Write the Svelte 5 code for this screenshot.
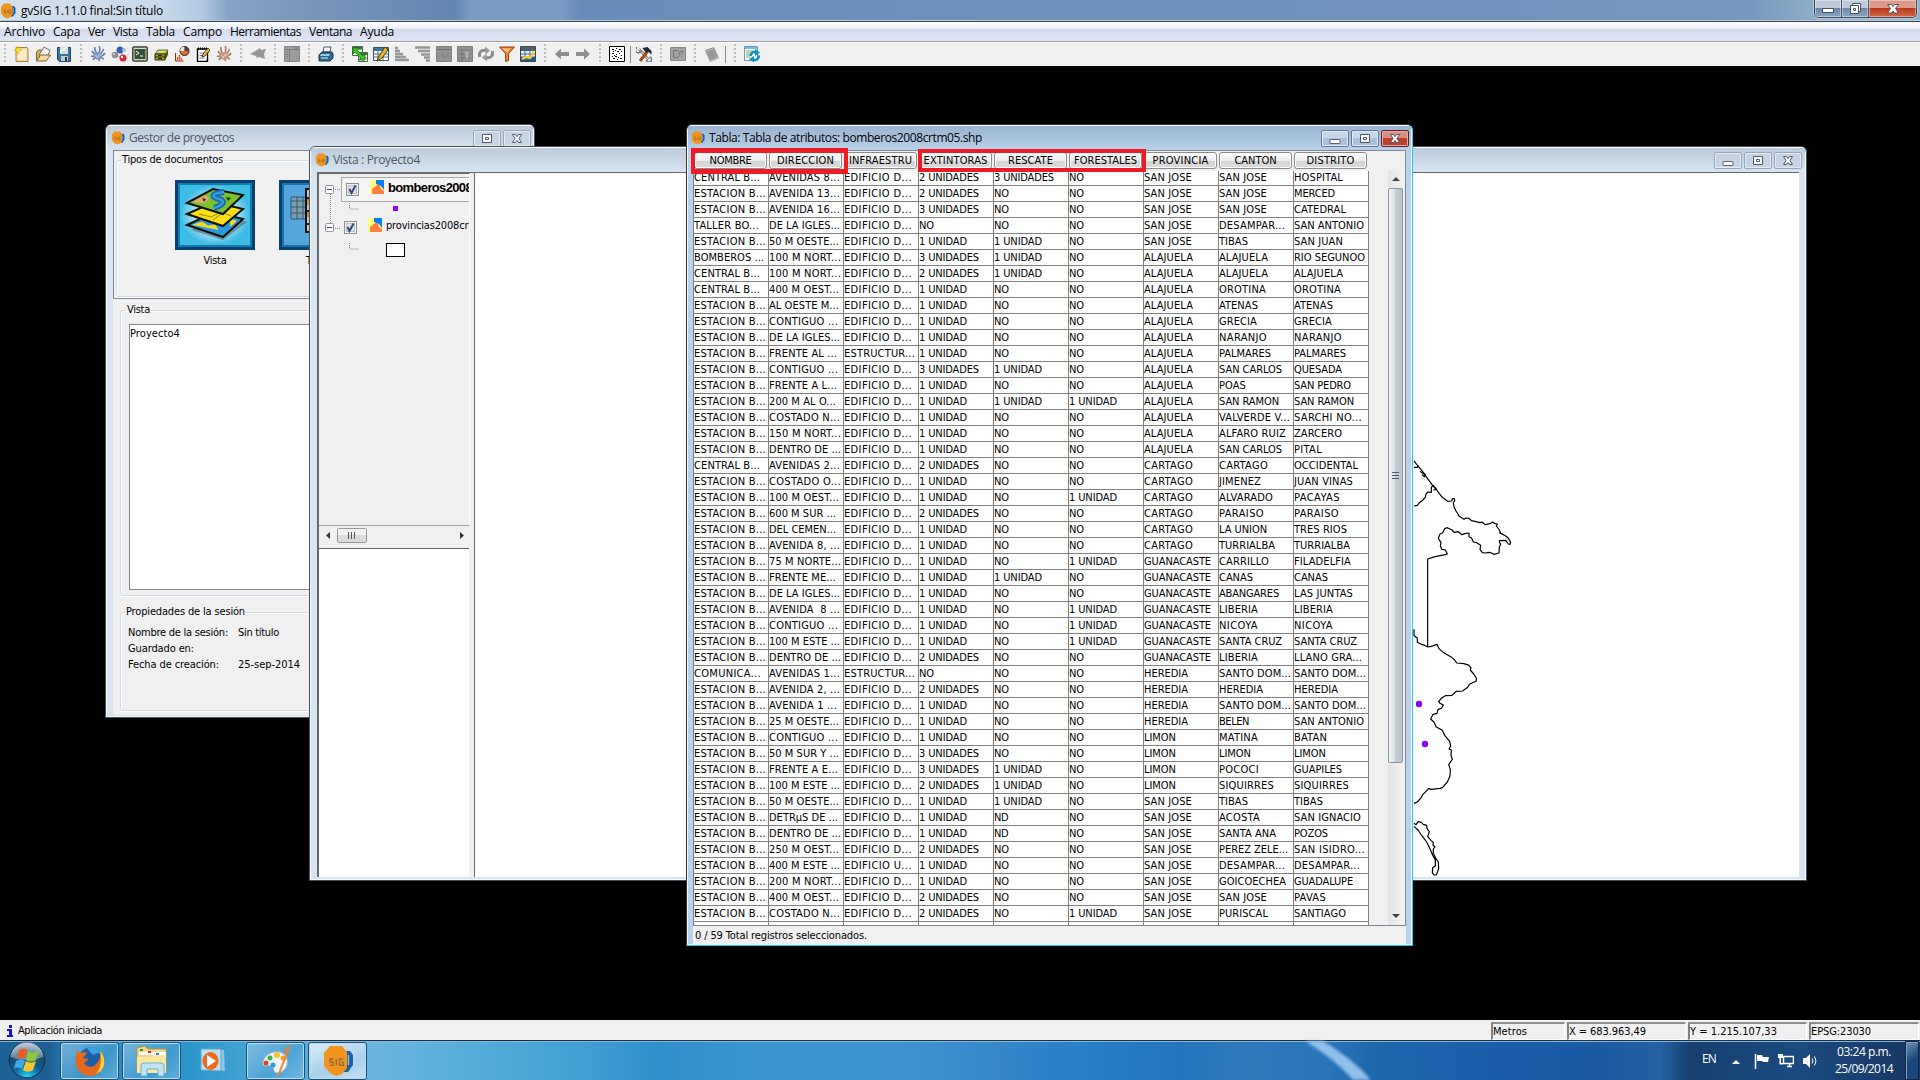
<script>
  const raw = `CENTRAL B...|AVENIDAS 8...|EDIFICIO D...|2 UNIDADES|3 UNIDADES|NO|SAN JOSE|SAN JOSE|HOSPITAL
ESTACION B...|AVENIDA 13...|EDIFICIO D...|2 UNIDADES|NO|NO|SAN JOSE|SAN JOSE|MERCED
ESTACION B...|AVENIDA 16...|EDIFICIO D...|3 UNIDADES|NO|NO|SAN JOSE|SAN JOSE|CATEDRAL
TALLER BO...|DE LA IGLES...|EDIFICIO D...|NO|NO|NO|SAN JOSE|DESAMPAR...|SAN ANTONIO
ESTACION B...|50 M OESTE...|EDIFICIO D...|1 UNIDAD|1 UNIDAD|NO|SAN JOSE|TIBAS|SAN JUAN
BOMBEROS ...|100 M NORT...|EDIFICIO D...|3 UNIDADES|1 UNIDAD|NO|ALAJUELA|ALAJUELA|RIO SEGUNOO
CENTRAL B...|100 M NORT...|EDIFICIO D...|2 UNIDADES|1 UNIDAD|NO|ALAJUELA|ALAJUELA|ALAJUELA
CENTRAL B...|400 M OEST...|EDIFICIO D...|1 UNIDAD|NO|NO|ALAJUELA|OROTINA|OROTINA
ESTACION B...|AL OESTE M...|EDIFICIO D...|1 UNIDAD|NO|NO|ALAJUELA|ATENAS|ATENAS
ESTACION B...|CONTIGUO ...|EDIFICIO D...|1 UNIDAD|NO|NO|ALAJUELA|GRECIA|GRECIA
ESTACION B...|DE LA IGLES...|EDIFICIO D...|1 UNIDAD|NO|NO|ALAJUELA|NARANJO|NARANJO
ESTACION B...|FRENTE AL ...|ESTRUCTUR...|1 UNIDAD|NO|NO|ALAJUELA|PALMARES|PALMARES
ESTACION B...|CONTIGUO ...|EDIFICIO D...|3 UNIDADES|1 UNIDAD|NO|ALAJUELA|SAN CARLOS|QUESADA
ESTACION B...|FRENTE A L...|EDIFICIO D...|1 UNIDAD|NO|NO|ALAJUELA|POAS|SAN PEDRO
ESTACION B...|200 M AL O...|EDIFICIO D...|1 UNIDAD|1 UNIDAD|1 UNIDAD|ALAJUELA|SAN RAMON|SAN RAMON
ESTACION B...|COSTADO N...|EDIFICIO D...|1 UNIDAD|NO|NO|ALAJUELA|VALVERDE V...|SARCHI NO...
ESTACION B...|150 M NORT...|EDIFICIO D...|1 UNIDAD|NO|NO|ALAJUELA|ALFARO RUIZ|ZARCERO
ESTACION B...|DENTRO DE ...|EDIFICIO D...|1 UNIDAD|NO|NO|ALAJUELA|SAN CARLOS|PITAL
CENTRAL B...|AVENIDAS 2...|EDIFICIO D...|2 UNIDADES|NO|NO|CARTAGO|CARTAGO|OCCIDENTAL
ESTACION B...|COSTADO O...|EDIFICIO D...|1 UNIDAD|NO|NO|CARTAGO|JIMENEZ|JUAN VINAS
ESTACION B...|100 M OEST...|EDIFICIO D...|1 UNIDAD|NO|1 UNIDAD|CARTAGO|ALVARADO|PACAYAS
ESTACION B...|600 M SUR ...|EDIFICIO D...|2 UNIDADES|NO|NO|CARTAGO|PARAISO|PARAISO
ESTACION B...|DEL CEMEN...|EDIFICIO D...|1 UNIDAD|NO|NO|CARTAGO|LA UNION|TRES RIOS
ESTACION B...|AVENIDA 8, ...|EDIFICIO D...|1 UNIDAD|NO|NO|CARTAGO|TURRIALBA|TURRIALBA
ESTACION B...|75 M NORTE...|EDIFICIO D...|1 UNIDAD|NO|1 UNIDAD|GUANACASTE|CARRILLO|FILADELFIA
ESTACION B...|FRENTE ME...|EDIFICIO D...|1 UNIDAD|1 UNIDAD|NO|GUANACASTE|CANAS|CANAS
ESTACION B...|DE LA IGLES...|EDIFICIO D...|1 UNIDAD|NO|NO|GUANACASTE|ABANGARES|LAS JUNTAS
ESTACION B...|AVENIDA  8 ...|EDIFICIO D...|1 UNIDAD|NO|1 UNIDAD|GUANACASTE|LIBERIA|LIBERIA
ESTACION B...|CONTIGUO ...|EDIFICIO D...|1 UNIDAD|NO|1 UNIDAD|GUANACASTE|NICOYA|NICOYA
ESTACION B...|100 M ESTE ...|EDIFICIO D...|1 UNIDAD|NO|1 UNIDAD|GUANACASTE|SANTA CRUZ|SANTA CRUZ
ESTACION B...|DENTRO DE ...|EDIFICIO D...|2 UNIDADES|NO|NO|GUANACASTE|LIBERIA|LLANO GRA...
COMUNICA...|AVENIDAS 1...|ESTRUCTUR...|NO|NO|NO|HEREDIA|SANTO DOM...|SANTO DOM...
ESTACION B...|AVENIDA 2, ...|EDIFICIO D...|2 UNIDADES|NO|NO|HEREDIA|HEREDIA|HEREDIA
ESTACION B...|AVENIDA 1 ...|EDIFICIO D...|1 UNIDAD|NO|NO|HEREDIA|SANTO DOM...|SANTO DOM...
ESTACION B...|25 M OESTE...|EDIFICIO D...|1 UNIDAD|NO|NO|HEREDIA|BELEN|SAN ANTONIO
ESTACION B...|CONTIGUO ...|EDIFICIO D...|1 UNIDAD|NO|NO|LIMON|MATINA|BATAN
ESTACION B...|50 M SUR Y ...|EDIFICIO D...|3 UNIDADES|NO|NO|LIMON|LIMON|LIMON
ESTACION B...|FRENTE A E...|EDIFICIO D...|3 UNIDADES|1 UNIDAD|NO|LIMON|POCOCI|GUAPILES
ESTACION B...|100 M ESTE ...|EDIFICIO D...|2 UNIDADES|1 UNIDAD|NO|LIMON|SIQUIRRES|SIQUIRRES
ESTACION B...|50 M OESTE...|EDIFICIO D...|1 UNIDAD|1 UNIDAD|NO|SAN JOSE|TIBAS|TIBAS
ESTACION B...|DETRµS DE ...|EDIFICIO D...|1 UNIDAD|ND|NO|SAN JOSE|ACOSTA|SAN IGNACIO
ESTACION B...|DENTRO DE ...|EDIFICIO D...|1 UNIDAD|ND|NO|SAN JOSE|SANTA ANA|POZOS
ESTACION B...|250 M OEST...|EDIFICIO D...|2 UNIDADES|NO|NO|SAN JOSE|PEREZ ZELE...|SAN ISIDRO...
ESTACION B...|400 M ESTE ...|EDIFICIO U...|1 UNIDAD|NO|NO|SAN JOSE|DESAMPAR...|DESAMPAR...
ESTACION B...|200 M NORT...|EDIFICIO D...|1 UNIDAD|NO|NO|SAN JOSE|GOICOECHEA|GUADALUPE
ESTACION B...|400 M OEST...|EDIFICIO D...|2 UNIDADES|NO|NO|SAN JOSE|SAN JOSE|PAVAS
ESTACION B...|COSTADO N...|EDIFICIO D...|2 UNIDADES|NO|1 UNIDAD|SAN JOSE|PURISCAL|SANTIAGO`;
  const rows = raw.split('\n').map((r) => r.split('|'));
  const heads = ['NOMBRE', 'DIRECCION', 'INFRAESTRU', 'EXTINTORAS', 'RESCATE', 'FORESTALES', 'PROVINCIA', 'CANTON', 'DISTRITO'];
  const menus = [['Archivo', 41], ['Capa', 27], ['Ver', 17], ['Vista', 25], ['Tabla', 29], ['Campo', 39], ['Herramientas', 71], ['Ventana', 43], ['Ayuda', 34]];

  // Advance widths of the grid font, in pixels
  const adv = { ' ': 3, '.': 4, ',': 3, B: 6, E: 6, F: 6, I: 4, J: 5, K: 6, L: 5, M: 8, O: 8, P: 6, Q: 8, S: 6, T: 6, V: 6, Y: 6, Z: 6, 'µ': 6 };
  const measure = (s) => [...s].reduce((n, c) => n + (adv[c] ?? (c >= '0' && c <= '9' ? 6 : 7)), 0);

  // Spreads letters so that a label takes exactly the given width
  function fit(node, width) {
    const w = node.getBoundingClientRect().width;
    node.style.letterSpacing = (width - w) / node.textContent.length + 'px';
  }

  const squid = (a, b) => `<path d="M2 5c1 2 2 3 4 4M1 10c2 1 3 0 5-1M3 14c1-2 2-3 4-4M5 1c-1 3 1 5 2 7M9 0c2 3 0 5 0 8M13 3c1 2-2 3-3 6M15 7c-1 2-3 3-5 3M14 13c-2 0-3-2-5-3M9 15c1-2-1-3-1-5" stroke="${a}" stroke-width="1.700" fill="none"/><circle cx="8" cy="10" r="3.800" fill="${b}"/><path d="M5.500 9l2 2.500 2-3.500 2 2" stroke="#fff" stroke-width=".9" fill="none" opacity=".7"/>`;
  const icons = {
    new: '<path d="M2 1.500h11l1 2v12h-12z" fill="#f3dca4" stroke="#a98241"/><path d="M4 4h8v10h-8z" fill="#fbeecb"/><path d="M4 0l1 3 3 1-3 1-1 3-1-3-3-1 3-1z" fill="#fff22a" stroke="#d3b400" stroke-width=".6"/>',
    open: '<path d="M1.500 15v-9l2-2h3l1 2h4v4" fill="#d7b36b" stroke="#80601f"/><path d="M4 9l5-8 6 3.500-3 6z" fill="#f2f2f2" stroke="#666" stroke-width=".9"/><path d="M1.500 15l4-6h10l-4.500 6z" fill="#f2d9a0" stroke="#80601f"/>',
    save: '<path d="M1.500 1.500h13v14h-11l-2-2z" fill="#37759c" stroke="#1a4561"/><path d="M4 1h8v7h-8z" fill="#d5dde0"/><path d="M5 10h7v5h-7z" fill="#c4ccd0"/><path d="M9 11h2v4h-2z" fill="#333"/><path d="M4 5l6-4h2l-8 6z" fill="#fff"/>',
    squid: squid('#6d83ad', '#8295bd'),
    globes: '<path d="M4 9l5-6 3 9z" fill="none" stroke="#aaa"/><circle cx="4" cy="9" r="3.300" fill="#8e9193"/><circle cx="9" cy="4" r="3.500" fill="#345fb2"/><circle cx="13" cy="4" r="2" fill="#bbb"/><circle cx="12" cy="12" r="3.500" fill="#e3202c"/><circle cx="11" cy="11" r="1.200" fill="#fff"/><circle cx="3" cy="8" r="1" fill="#ddd"/>',
    console: '<rect x=".8" y="1" width="14.400" height="14" rx="1" fill="#dcdcc0" stroke="#3b4433" stroke-width="1.500"/><rect x="2.500" y="3" width="11" height="10" fill="#34513a"/><path d="M4 5l3 2-3 2M8 10h3" stroke="#fff" fill="none"/>',
    drawer: '<path d="M2 8l3-4h10l-3 4z" fill="#d2dc5f" stroke="#333" stroke-width=".7"/><path d="M12 8l3-4v5l-3 5z" fill="#5c6310"/><path d="M2 8h10v6h-10z" fill="#a2ac28" stroke="#26290a"/><path d="M2 11h10M5 9.500h4M5 12.500h4" stroke="#26290a"/>',
    pie: '<path d="M1.500 7v8h8" stroke="#8a2414" fill="none"/><path d="M3.500 14v-3M5.500 14v-5M7.500 14v-2" stroke="#e0542c" stroke-width="1.400"/><circle cx="10.500" cy="5" r="4.500" fill="#e96d2e" stroke="#222"/><path d="M10.500 5V.5A4.500 4.500 0 0 0 6 5z" fill="#e4e4e4"/><path d="M10.500 5V.5A4.500 4.500 0 0 1 15 5z" fill="#444"/>',
    note: '<path d="M2.500 3h10v12.500h-10z" fill="#fff" stroke="#000" stroke-width="1.400"/><path d="M3 2.500h9" stroke="#000" stroke-width="2" stroke-dasharray="1 1"/><path d="M4.500 7h5M4.500 9.500h3M4.500 12h5" stroke="#777"/><path d="M7 11l1-3 5-6 2 2-5 6z" fill="#f2b632" stroke="#222" stroke-width=".8"/>',
    squid2: squid('#a97c6a', '#c5977f'),
    fish: '<path d="M0 8l7-4 3-2 1 2 5-1-2 5 1 5-6-2-2 1-1-2z" fill="#969696"/>',
    form: '<path d="M.5.500h15v15h-15z" fill="#9c9c9c" stroke="#858585"/><path d="M1 3.500h14M10 2h4M5.500 4v11" stroke="#7c7c7c"/><path d="M2 6h2M2 8.500h2M2 11h2" stroke="#808080"/>',
    print: '<path d="M5 6l1-5h7l-1 5z" fill="#fff" stroke="#456"/><path d="M1 9l3-3h10l1 2v4l-3 3h-11z" fill="#2d6a90" stroke="#15344a"/><path d="M3 8h9l-1 2h-9z" fill="#9fc5d8"/><path d="M3 12h7" stroke="#d7eaf3"/>',
    tgreen: '<path d="M.5.500h10v9h-10z" fill="#dfeadf" stroke="#456b47"/><path d="M1 1h9v2.500h-9z" fill="#397449"/><path d="M6.500 6.500h9v9h-9z" fill="#fff" stroke="#456b47"/><path d="M7 7h8v2h-8z" fill="#397449"/><path d="M7 12h8M10.500 9v6" stroke="#678"/><path d="M1 2h6l-2 2 6 6 2-2v6h-6l2-2-6-6-2 2z" fill="#38c51d" stroke="#126b08" stroke-width=".7"/>',
    tpencil: '<path d="M.5 1.500h15v13h-15z" fill="#fff" stroke="#33556e"/><path d="M1 2h14v3h-14z" fill="#3f7a9b"/><path d="M1 8h14M1 11h14M5 3v11M10 3v11" stroke="#4f7187"/><path d="M4 15l2-5 6-9 3 3-6 8z" fill="#e7b52a" stroke="#4e3b07"/>',
    asc: '<path d="M1 2h3M1 5h5M1 8h8M1 11h11M1 14h14" stroke="#969696" stroke-width="2.300"/>',
    desc: '<path d="M0 1.500h15M3 5h12M6 8.500h9M9 11.500h6M11 14.500h4" stroke="#969696" stroke-width="2.300"/>',
    gbox: '<path d="M.5.500h15v15h-15z" fill="#929292" stroke="#7f7f7f"/><path d="M1 3.500h14" stroke="#707070"/><path d="M6 9l3 3 4-5" stroke="#7c7c7c" fill="none"/>',
    gtab: '<path d="M.5.500h15v15h-15z" fill="#929292" stroke="#7f7f7f"/><path d="M1 4h14M1 8h14M1 12h14M5 4v12" stroke="#777"/><path d="M7 8l3-3 3 3zM9 8h2v5h-2z" fill="#b0b0b0"/>',
    refresh: '<path d="M2 11C0 6 4 3.500 8 4.500M14 5C16 10 12 12.500 8 11.500" stroke="#8c8c8c" stroke-width="3" fill="none"/><path d="M7 .5l5 4-4.500 4zM9 15.500l-5-4 4.500-4z" fill="#9b9b9b"/>',
    funnel: '<path d="M.6 1h14.800l-5.800 6.500v7l-3 1v-8z" fill="#f28332" stroke="#8c3e0b"/><path d="M3 2.500h9l-4 4z" fill="#ffc183"/>',
    chart: '<path d="M.5.500h15v15h-15z" fill="#e9eef2" stroke="#444"/><path d="M1 1h14v4h-14z" fill="#52616e"/><path d="M1 8h14M1 11h14M5 5v10M10 5v10" stroke="#3b74b1"/><path d="M1 11h14v4h-14z" fill="#1d5d9b"/><path d="M2 13l4-2 4 1 4-6" stroke="#ffcc24" stroke-width="2.400" fill="none"/>',
    left: '<path d="M1 8l6-5.500v3.500h8v4h-8v3.500z" fill="#8e8e8e"/>',
    right: '<path d="M15 8l-6-5.500v3.500h-8v4h8v3.500z" fill="#8e8e8e"/>',
    dots: '<path d="M.5.500h15v15h-15z" fill="#fff" stroke="#000"/><path d="M3 3.500h2M7 2.500h1M10 3.500h2M4 5.500h1M8 5.500h2M12 5.500h1M3 7.500h2M7 8.500h1M10 7.500h1M12 9.500h1M3 10.500h1M6 10.500h2M9 11.500h1M4 12.500h2M8 13.500h1M11 12.500h2M5 9.500h1M6 4.500h1" stroke="#000"/>',
    tools: '<path d="M3 3l9.500 10.500" stroke="#70757a" stroke-width="2.600"/><path d="M3 3l9.500 10.500" stroke="#e7e7e7" stroke-width="1"/><path d="M1 1.500a2.800 2.800 0 1 0 4 3M10.500 14a2.600 2.600 0 1 0 3-3" fill="none" stroke="#70757a" stroke-width="1.500"/><path d="M4 15l7-9" stroke="#a44a1b" stroke-width="3"/><path d="M6.500 2l5-1 4 4v3.500l-3-2.500-2.500 1z" fill="#22272c"/>',
    dbox: '<path d="M.5 1.500h15v13h-15z" fill="#a2a2a2" stroke="#888"/><path d="M3.500 4.500h4l2 2v3l-2 2h-4zM10 5.500h3l-2 3M11 10.500h1" fill="none" stroke="#777"/>',
    book: '<path d="M1 4l9-3 5 11-9 4z" fill="#989898"/><path d="M3 5l6-2M6 15l8-4" stroke="#bbb"/>',
    reload: '<path d="M.5.500h13v14h-13z" fill="#f6fbf6" stroke="#5b9ac4"/><path d="M1 1h12v2h-12z" fill="#84b9dc"/><path d="M2 5h9M2 7h6M2 9h4M2 11h4" stroke="#79b06c"/><path d="M6.500 10C7 6 10 5.500 12 6.500M15 9.500C14.500 14 11 14.500 9 13.500" stroke="#1590cd" stroke-width="2.600" fill="none"/><path d="M11 3l5 3.500-5 3.500zM10 16.500l-5-3.500 5-3z" fill="#1590cd"/>'
  };
  const toolbar = '| new open save | squid globes console drawer pie note squid2 | fish | form | print | tgreen tpencil asc desc gbox gtab refresh funnel chart | left right | dots ! tools | dbox | book ! | reload'.split(' ');
</script>

{#snippet gv(size)}
  <svg class="gv" width={size} height={size} viewBox="0 0 16 16">
    <path d="M11 3h3l1.500 2v5l-2.500 3.500h-2z" fill="#1d62a0" /><path d="M13.200 5v5" fill="none" stroke="#8fbce0" stroke-width=".7" />
    <path d="M4 .5h6l2.500 3v8l-2.500 3-3 1-3-1.500-3-3.500v-6.500z" fill="#f0941c" /><path d="M5.600 7h-1.600v1.500h1.500v1.700h-1.600M7.200 7v3.200M10.600 7h-1.800v3.200h1.800v-1.600h-.8" stroke="#8f6a3d" stroke-width=".7" fill="none" />
  </svg>
{/snippet}
{#snippet btn(kind, red = false)}
  <span class="wb" class:red>
    <svg width="14" height="12" viewBox="0 0 14 12">
      {#if kind === 'min'}<rect x="2" y="6.500" width="10" height="4" rx=".5" fill="#fff" stroke="#5a6274" />
      {:else if kind === 'max'}<path d="M2.500 1.500h9v8h-9zM5.500 4.500h3v2h-3z" fill="#fff" stroke="#4f586c" />
      {:else}<path d="M2.500 1.500h3L7 3.500l1.500-2h3L9 5.500l2.500 4h-3L7 7.500l-1.500 2h-3L5 5.500z" fill="#fff" stroke="#4f586c" />{/if}
    </svg>
  </span>
{/snippet}

<div class="screen">
  <header class="title">
    {@render gv(16)}<span class="t seg" use:fit={142}>gvSIG 1.11.0 final:Sin título</span>
    <div class="caps">
      <i><svg width="14" height="12"><rect x="1.500" y="5.500" width="11" height="4" fill="#fff" stroke="#4b5568" /></svg></i>
      <i><svg width="14" height="14"><path d="M4.500 1.500h8v8h-8z" fill="#fff" stroke="#4b5568" /><path d="M2.500 3.500h8v8h-8zM5.500 6.500h2v2h-2z" fill="#fff" stroke="#4b5568" /></svg></i>
      <i class="close"><svg width="14" height="12"><path d="M1.500 1.500h4l1.500 2 1.500-2h4l-3 4 3 4.500h-4L7 8l-1.500 2h-4l3-4.500z" fill="#fff" stroke="#5c4a5a" /></svg></i>
    </div>
  </header>
  <nav class="menu">{#each menus as [m, w]}<span class="seg" use:fit={w}>{m}</span>{/each}</nav>
  <div class="tools">
    {#each toolbar as k}
      {#if k === '|'}<span class="sep"></span>
      {:else if k === '!'}<span class="line"></span>
      {:else}<span class="ico"><svg width="16" height="16" viewBox="0 0 16 16">{@html icons[k]}</svg></span>{/if}
    {/each}
  </div>

  <main class="desk">
    <section class="win gestor">
      <div class="bar">{@render gv(14)}<span class="seg" use:fit={105}>Gestor de proyectos</span><div class="wbs">{@render btn('max')}{@render btn('x')}</div></div>
      <div class="gbody">
        <div class="types">
          <fieldset>
            <legend><span use:fit={101}>Tipos de documentos</span></legend>
            <div class="docs">
              <div class="doc">
                <svg width="80" height="70" viewBox="0 0 80 70">
                  <defs><radialGradient id="glow"><stop offset=".35" stop-color="#effdff" /><stop offset="1" stop-color="#3cbbe4" /></radialGradient></defs>
                  <rect width="80" height="70" fill="#05406e" /><rect x="3" y="3" width="74" height="64" fill="#117bb0" /><rect x="5" y="5" width="70" height="60" fill="url(#glow)" />
                  <path d="M16 50l34-16 22 8-24 18z" fill="#444" opacity=".45" />
                  <path d="M12 45l28-13 28 7-20 18z" fill="#279bdc" stroke="#111" stroke-width="2" /><path d="M18 45l9-3 6 4 7-1 3 5M55 39l6 2-5 5z" fill="#f3da22" stroke="#f3da22" />
                  <path d="M12 34l27-12 29 7-20 17z" fill="#fcdf14" stroke="#111" stroke-width="2" /><path d="M24 34l12 3 10-5 10 4M38 40l8-6 8-7" stroke="#9d8508" fill="none" />
                  <path d="M12 23l26-14 30 6-20 19z" fill="#7cc22f" stroke="#111" stroke-width="2" /><path d="M17 22l13-7 4 4-4 4z" fill="#eda678" /><path d="M49 12c-15 2-12 5-5 7s4 6-5 9" stroke="#1768ad" stroke-width="6" fill="none" /><path d="M49 12c-15 2-12 5-5 7s4 6-5 9" stroke="#3a98dd" stroke-width="2.500" fill="none" /><path d="M27 18l4 1-2 3zM51 17l5 1-3 3z" fill="#193c11" />
                </svg>
                <span use:fit={23}>Vista</span>
              </div>
              <div class="doc">
                <svg width="80" height="70" viewBox="0 0 80 70">
                  <rect width="80" height="70" fill="#05406e" /><rect x="3" y="3" width="74" height="64" fill="#1673ae" /><rect x="5" y="5" width="70" height="60" fill="#55a6dc" />
                  <path d="M12 17h16v22h-16z" fill="#7d9cae" stroke="#2d5872" /><path d="M12 21h16M12 27h16M12 33h16M18 17v22M24 17v22" stroke="#325a74" /><path d="M27 9h30v43h-30z" fill="#bfc6c9" stroke="#111" stroke-width="2" /><path d="M28 19h28v6h-28zM28 32h28v5h-28z" fill="#c98b35" /><path d="M28 18h28M28 31h28M28 44h28" stroke="#222" stroke-width="2" />
                </svg>
                <span use:fit={26}>Tabla</span>
              </div>
            </div>
          </fieldset>
        </div>
        <fieldset class="list"><legend><span use:fit={23}>Vista</span></legend><div class="lb"><span use:fit={50}>Proyecto4</span></div></fieldset>
        <fieldset class="props"><legend><span use:fit={119}>Propiedades de la sesión</span></legend>
          <dl><dt><span use:fit={100}>Nombre de la sesión:</span></dt><dd><span use:fit={41}>Sin título</span></dd><dt><span use:fit={66}>Guardado en:</span></dt><dd></dd><dt><span use:fit={91}>Fecha de creación:</span></dt><dd><span use:fit={62}>25-sep-2014</span></dd></dl>
        </fieldset>
      </div>
    </section>

    <section class="win vista">
      <div class="bar">{@render gv(14)}<span class="seg" use:fit={87}>Vista : Proyecto4</span><div class="wbs">{@render btn('min')}{@render btn('max')}{@render btn('x')}</div></div>
      <div class="vbody">
        <aside>
          <div class="toc">
            <svg class="conn" width="150" height="100"><path d="M11.500 20v29M16 15.500h6M16 54.500h6M30.500 29v6h10M30.500 69v6h10" fill="none" stroke="#888" stroke-dasharray="1 1" /></svg>
            {#each [['bomberos2008', true], ['provincias2008crt', false]] as [name, active]}
              <div class="layer" class:active>
                <svg class="pm" width="9" height="9"><rect x=".5" y=".5" width="8" height="8" rx="1" fill="#fff" stroke="#929292" /><path d="M2 4.500h5" stroke="#2a4aa0" /></svg>
                <div class="lab">
                  <svg class="cb" width="13" height="13"><rect x=".5" y=".5" width="12" height="12" fill="#f4f4f4" stroke="#8e8f8f" /><rect x="2.500" y="2.500" width="8" height="8" fill="#dfe3e8" stroke="#b9bec5" /><path d="M3.500 6l2 4 4-7.500" stroke="#34497f" stroke-width="2" fill="none" /></svg>
                  <svg width="14" height="14"><path d="M0 0h14v14h-14z" fill="#ffff80" /><path d="M6 0h8v10l-3-4-5-2z" fill="#0080ff" /><path d="M2 14v-5l5-4h3l1 4 3 2v3z" fill="#ff8040" /></svg>
                  <span use:fit={active ? 84 : 86}>{name}</span>
                </div>
              </div>
              <div class="sym">{#if active}<b></b>{:else}<em></em>{/if}</div>
            {/each}
          </div>
          <div class="hs"><svg width="150" height="17"><path d="M11 5v7l-4-3.500zM141 5v7l4-3.500z" fill="#333" /><rect x="18.500" y="1.500" width="29" height="14" rx="1" fill="#dcdcdc" stroke="#979797" /><path d="M19 2h28v6h-28z" fill="#f1f1f1" /><path d="M29.500 5v7M32.500 5v7M35.500 5v7" stroke="#555" /></svg></div>
          <div class="loc"></div>
        </aside>
        <div class="map">
          <svg width="1323" height="703">
            <g transform="translate(885 227) scale(.33333)" fill="none" stroke="#000" stroke-width="3.600" stroke-linejoin="round">
              <path d="M162 183L170 193 186 212 200 232 216 254 230 270 245 290 263 304 275 303 277 296 283 296 284 303 280 308 282 320 288 333 298 349 312 358 318 354 326 355 335 362 348 365 360 368 366 366 376 374 390 371 398 366 405 371 412 372 409 378 418 390 422 400 437 408 444 413 452 427 450 433 445 432 437 421 418 422 419 428 422 433 418 441 417 459 402 463 395 459 387 457 376 459 367 458 360 448 362 436 350 428 340 426 335 415 327 410 327 399 314 401 306 404 295 395 282 397 276 390 262 383 254 386 248 398 240 402 235 415 243 428 241 438 246 448 256 450 262 462 256 464 225 470 203 477V740" />
              <path d="M162 318L172 316 178 308 190 299 196 292 198 282 204 276 214 277 214 262 219 256 230 268 220 270M162 202h10l2-6M180 214l10 7 6 2-2 7-8-6M418 398l10 5" />
              <path d="M162 688L162 707 172 714 172 727 182 732 194 736 203 741 214 739 231 733 237 746 247 755 259 763 275 772 284 780 290 789 312 791 327 796 333 803 331 810 341 822 349 834 349 843 328 853 323 862 308 873 288 874 276 886 256 887 245 894 236 904 240 910 250 915 245 924 234 929 231 940 219 943 212 957 222 966 228 980 247 991 254 1006 269 1024 272 1038 267 1047 274 1050 273 1066 277 1078 266 1094 271 1108 270 1128 262 1146 248 1162 240 1165 215 1168 206 1166 188 1184 184 1192 172 1206 162 1210" />
              <path d="M162 1270L168 1274 175 1265 184 1267 190 1273 200 1276 201 1286 208 1295 203 1310 214 1322 220 1328 219 1336 225 1340 220 1347 220 1360 228 1376 235 1386 236 1406 229 1425 222 1425 217 1418 218 1403 226 1398 226 1379 218 1366 210 1346 200 1326 188 1310 182 1302 174 1290 162 1279" />
            </g>
            <circle cx="944" cy="531" r="3.200" fill="#9000ff" /><circle cx="950" cy="571" r="3.200" fill="#9000ff" />
          </svg>
        </div>
      </div>
    </section>

    <section class="win tabla">
      <div class="bar">{@render gv(14)}<span class="seg" use:fit={273}>Tabla: Tabla de atributos: bomberos2008crtm05.shp</span><div class="wbs">{@render btn('min')}{@render btn('max')}{@render btn('x', true)}</div></div>
      <div class="grid">
        <div class="cols">
          <div class="hr">{#each heads as h}<div><span use:fit={measure(h)}>{h}</span></div>{/each}</div>
          <div class="rows">
            {#each rows as r}<div class="row">{#each r as c}<div><span use:fit={measure(c)}>{c}</span></div>{/each}</div>{/each}
            <div class="row">{#each heads as h}<div></div>{/each}</div>
          </div>
        </div>
        <div class="vs">
          <svg width="16" height="18"><path d="M4 11h8l-4-4z" fill="#444" /></svg>
          <div class="thumb"><i></i></div>
          <svg width="16" height="18"><path d="M4 7h8l-4 4z" fill="#444" /></svg>
        </div>
      </div>
      <div class="foot"><span use:fit={172}>0 / 59 Total registros seleccionados.</span></div>
      <div class="mark m1"></div><div class="mark m2"></div>
    </section>
  </main>

  <footer class="status">
    <svg width="6" height="12"><path d="M2 0h3v3h-3zM0 4h5v6h1v2h-6v-2h2v-4h-2z" fill="#1414d8" /></svg>
    <span use:fit={84}>Aplicación iniciada</span>
    <div class="cells">
      <div><span use:fit={34}>Metros</span></div><div><span use:fit={77}>X = 683.963,49</span></div><div><span use:fit={87}>Y = 1.215.107,33</span></div><div><span use:fit={60}>EPSG:23030</span></div>
    </div>
  </footer>
  <div class="task">
    <svg class="streak" width="90" height="39"><path d="M10 0h18q30 18 48 39h-18Q40 18 10 0z" fill="#a5cdf4" opacity=".85" /></svg>
    <div class="orb"><svg width="38" height="38" viewBox="0 0 38 38">
      <defs><radialGradient id="orb" cx=".5" cy="1" r="1"><stop offset="0" stop-color="#23d7ff" /><stop offset=".4" stop-color="#10619a" /><stop offset=".7" stop-color="#1d4968" /><stop offset="1" stop-color="#a9bdcb" /></radialGradient></defs>
      <circle cx="19" cy="19" r="17.800" fill="url(#orb)" stroke="#12344f" /><path d="M3 16a16 15 0 0 1 32 0c-8 4-24 4-32 0z" fill="#fff" opacity=".35" />
      <path d="M11 9c3-2 6-2 8 0l-2 9c-3-2-5-2-8 0z" fill="#ee5a23" /><path d="M20 10c3 2 7 2 11 0l-3 9c-3 2-7 2-10 0z" fill="#8cc63f" /><path d="M8 20c3-2 6-2 9 0l-3 8c-3-2-5-2-8 0z" fill="#3fa9e8" /><path d="M18 20c3 2 6 2 10 0l-3 9c-3 2-7 2-10 0z" fill="#fdc82e" />
    </svg></div>
    <div class="tb"><svg width="32" height="32" viewBox="0 0 32 32"><circle cx="17" cy="14" r="12" fill="#1f5fa6" /><path d="M13 3c6-3 13 1 14 6-3-2-5-1-7 1-3-1-5-4-7-7z" fill="#39a2dc" /><path d="M3 5c1 2 2 2 4 3 2-1 4-1 6 0-1 2-3 3-4 5l5 1c-1 3-3 3-4 4 2 4 8 5 11 2 5-4 6-9 5-14 5 5 6 14 1 20-6 7-17 6-22 0C1 21 1 11 3 5z" fill="#e66a1c" /><path d="M26 6c5 5 6 14 1 20l-5 3c5-5 6-14 4-23z" fill="#fbd13a" /></svg></div>
    <div class="tb"><svg width="34" height="32" viewBox="0 0 34 32"><path d="M2 3l8-2 3 3h18v23h-29z" fill="#f3da86" stroke="#b69843" /><path d="M4 7h27v3h-27z" fill="#fff" /><path d="M5 4h3v2h-3z" fill="#18a42f" /><path d="M13 6h3v2h-3z" fill="#d42a28" /><path d="M21 8h3v2h-3z" fill="#2585dc" /><path d="M2 12h13l3-2h13v18h-29z" fill="#f9e7a2" /><path d="M6 31v-10q0-3 3-3h17q3 0 3 3v10h-6v-7h-11v7z" fill="#bfe6f7" stroke="#6baecd" /></svg></div>
    <div class="tb plain"><svg width="28" height="28" viewBox="0 0 28 28"><path d="M6 3h19l1 21-19-1z" fill="#8fc6e2" /><path d="M2 2h20v22l-20-1z" fill="#b9dff1" stroke="#64a5c6" /><ellipse cx="11.500" cy="14" rx="8" ry="9" fill="#ef6a1a" /><path d="M8 8l9 6-9 6z" fill="#fff" /></svg></div>
    <div class="tb"><svg width="34" height="32" viewBox="0 0 34 32"><path d="M4 16C8 5 25 3 28 14c2 8-4 14-10 14-5 0-2-6-6-7S2 23 4 16z" fill="#edf3f8" stroke="#9fb2c2" /><circle cx="7" cy="18" r="2.500" fill="#df3d2d" /><circle cx="11" cy="13" r="2.500" fill="#35b548" /><circle cx="18" cy="10" r="3" fill="#f6c22d" /><circle cx="24" cy="13" r="2.500" fill="#ef9c2a" /><circle cx="14" cy="20" r="2.500" fill="#2e9ad8" /><path d="M18 31l9-23 2 1-9 22z" fill="#eb8a31" /><path d="M25 8c0-4 2-7 6-8 0 5 0 8-4 10z" fill="#b98c65" /></svg></div>
    <div class="tb on">{@render gv(32)}</div>
    <div class="tray">
      <span class="seg en" use:fit={14}>EN</span>
      <svg width="8" height="5"><path d="M0 5l4-4 4 4z" fill="#fff" /></svg>
      <svg width="16" height="16"><path d="M1.500 1v15" stroke="#fff" stroke-width="1.500" /><path d="M3 2h5l1 2h6l-1 5h-5l-1-1h-5z" fill="#fff" /></svg>
      <svg width="16" height="16"><path d="M5.500 3.500h10v7h-10zM9 13.500h5M11.500 11v3" fill="none" stroke="#fff" stroke-width="1.500" /><path d="M0 1h5v4h-2v5h2v1.500h-3.500V5H0z" fill="#fff" /></svg>
      <svg width="16" height="16"><path d="M1 5h3l4-4v14l-4-4h-3z" fill="#fff" /><path d="M10 5.500q2 2.500 0 5M12.500 3.500q3 4.500 0 9" fill="none" stroke="#fff" /></svg>
      <div class="clock"><span class="seg" use:fit={54}>03:24 p.m.</span><span class="seg" use:fit={58}>25/09/2014</span></div>
      <div class="show"></div>
    </div>
  </div>
</div>

<style>
  :global(body) { background: #000; overflow: hidden; }
  .screen { width: 1920px; height: 1080px; display: flex; flex-direction: column; background: #000; font: 11px/14px 'DejaVu Sans Condensed', 'DejaVu Sans', sans-serif; font-stretch: condensed; color: #000; overflow: hidden; }
  .screen * { box-sizing: border-box; }
  span { white-space: pre; }
  svg { display: block; flex: none; }
  .screen .seg { font-family: 'Open Sans', 'Noto Sans', sans-serif; font-size: 12px; font-stretch: normal; }
  .title { height: 22px; flex: none; display: flex; align-items: flex-start; padding: 3px 2px 0 0; border-bottom: 1px solid #3b4658; box-shadow: inset 0 -1px #b9cbe0; background: linear-gradient(90deg, #d4e0ee 0, #c9d9ea 160px, #b3cbe3 200px, #86a5c6 228px, #7897b9 300px, #6287b0 455px, #789bc2 470px, #789bc2 560px, #668db7 580px, #6a90b9 800px, #6f93ba 1500px, #7598bd 1750px, #8cadc8 1810px, #93b1ca); }
  .title .t { margin: 0 0 0 5px; line-height: 16px; }
  .caps { display: flex; margin: -3px 1px 0 auto; width: 103px; height: 18px; border: 1px solid #3c4656; border-top: 0; border-radius: 0 0 5px 5px; overflow: hidden; box-shadow: 0 0 0 1px #b9cbdd; }
  .caps i { display: flex; align-items: center; justify-content: center; width: 27px; border-right: 1px solid #46546a; background: linear-gradient(#bccad9 0 45%, #6e88a6 50%, #8aa6c4); box-shadow: inset 0 0 0 1px #ffffff66; }
  .caps .close { flex: 1; border: 0; background: linear-gradient(#dd9a8a 0 45%, #bb3a1f 50%, #d66a48); }
  .menu { height: 20px; flex: none; display: flex; gap: 8px; padding: 2px 4px; background: linear-gradient(#fff 0, #e9edf6 7px, #d4dbed 7px, #dfe5f5 19px); border-bottom: 1px solid #a0a0a0; }
  .menu span { line-height: 16px; }
  .tools { height: 24px; flex: none; display: flex; background: #f0f0f0; border-top: 1px solid #fff; align-items: center; padding-bottom: 1px; }
  .tools > :first-child { margin-left: -1.500px; }
  .ico { width: 21px; padding-left: 2.500px; }
  .sep { width: 13px; height: 20px; flex: none; background: repeating-linear-gradient(#bdbdbd 0 2px, transparent 2px 4px) 5.500px 0 / 2px 100% no-repeat; }
  .line { width: 6px; height: 17px; flex: none; background: linear-gradient(#8c8c8c, #8c8c8c) 2.500px 0 / 1px 100% no-repeat; }
  .desk { height: 954px; flex: none; position: relative; }
  .win { position: absolute; border: 1px solid #4c4f55; border-radius: 6px 6px 0 0; background: #d7e4f2; padding: 0 7px; box-shadow: inset 1px 1px #f6fafd, inset -1px -1px #f2f7fb; display: flex; flex-direction: column; overflow: hidden; }
  .bar { height: 25px; flex: none; display: flex; align-items: center; gap: 4px; color: #4b5560; margin: 0 -6px; padding: 0 0 0 4px; background: linear-gradient(#f6fafd 1px, #bccbda 1px, #d7e4f2); }
  .bar span { line-height: 16px; }
  .wbs { display: flex; gap: 2px; margin: 5px 2px 0 auto; align-self: flex-start; }
  .wb { width: 28px; height: 17px; display: flex; align-items: center; justify-content: center; border: 1px solid #9aa7ba; border-radius: 2px; box-shadow: inset 0 0 0 1px #e3ecf6; background: #c6d4e4; }
  .gestor { left: 105px; top: 58px; width: 430px; height: 594px; }
  .gbody { flex: 1; background: #f0f0f0; margin-bottom: 2px; }
  .types { height: 149px; border: 1px solid #828790; padding: 2px; }
  fieldset { margin: 0; min-width: 0; border: 1px solid #d0dbe4; border-radius: 3px; box-shadow: inset 1px 1px #fff, 0 1px #fff; padding: 0; }
  legend { margin-left: 4px; padding: 0 1px; line-height: 14px; }
  .types fieldset { height: 144px; }
  .docs { display: flex; gap: 24px; padding: 13px 0 0 58px; }
  .doc { display: flex; flex-direction: column; align-items: center; gap: 4px; }
  .list { height: 293px; margin: 4px 7px 0; padding: 8px; }
  .list legend { margin-left: -3px; }
  .lb { height: 266px; margin-top: -1px; border: 1px solid #828790; background: #fff; padding: 2px 0 0; }
  .props { height: 106px; margin: 9px 7px 0; }
  dl { margin: 6px 0 0 7px; display: grid; grid-template-columns: 110px auto; grid-auto-rows: 16px; line-height: 16px; }
  dd, dt { margin: 0; }
  .vista { left: 309px; top: 80px; width: 1498px; height: 735px; }
  .vista .bar { margin-bottom: 0; }
  .vista .wbs { margin-right: 3px; }
  .vbody { flex: 1; display: flex; background: #f0f0f0; margin-bottom: 3px; border-top: 1px solid #696969; }
  aside { width: 156px; padding-right: 4px; border-left: 2px solid #696969; display: flex; flex-direction: column; }
  .toc { height: 353px; flex: none; position: relative; overflow: hidden; border-top: 1px solid #696969; border-bottom: 1px solid #a0a0a0; border-right: 1px solid #fff; padding: 3px 0 0 6px; width: 151px; }
  .conn { position: absolute; left: 0; top: 0; }
  .layer { height: 25px; display: flex; align-items: center; gap: 7px; position: relative; }
  .lab { display: flex; align-items: center; gap: 7px; height: 25px; width: 200px; padding-left: 4px; flex: none; border: 1px solid transparent; }
  .lab svg:nth-child(2) { margin: -5px 0 0 4px; }
  .lab span { margin: -4px 0 0 -3px; line-height: 18px; }
  .layer:not(.active) .lab { padding-left: 2px; }
  .active .lab { border-color: #a8a8a8; background: #f4f4f4; font: bold 13px 'Liberation Sans', sans-serif; font-stretch: normal; }
  .sym { height: 13px; padding: 4px 0 0 68px; }
  .sym b { display: block; width: 5px; height: 5px; background: #9000ff; }
  .sym em { display: block; width: 19px; height: 14px; border: 1px solid #000; background: #fff; margin: -1px 0 0 -7px; }
  .hs { height: 22px; padding-top: 1px; flex: none; }
  .loc { flex: 1; background: #fff; border-top: 1px solid #696969; }
  .map { flex: 1; background: #fff; border-left: 1px solid #696969; overflow: hidden; margin-left: 1px; }
  .tabla { left: 686px; top: 58px; width: 727px; height: 822px; background: #b9d1ea; border-color: #333 #27c9ea #27c9ea #333; padding: 0 6px; }
  .tabla .bar { background: linear-gradient(#f6fafd 1px, #99b4d1 1px, #b9d1ea); color: #000; margin: 0 -5px; padding-left: 3px; }
  .tabla .wb { border-color: #62789b; background: linear-gradient(#c7d7ea 50%, #a9bfdb 50%); }
  .tabla .wb.red { border-color: #5e2226; background: linear-gradient(#d98e84 50%, #b9402e 50%); box-shadow: inset 0 0 0 1px #e8aca4; }
  .tabla .wbs { gap: 2px; }
  .grid { height: 776px; flex: none; display: flex; background: #f0f0f0; border: 1px solid #828790; border-left: 0; }
  .cols { width: 676px; flex: none; }
  .hr { display: flex; height: 20px; padding-bottom: 1px; }
  .hr div { display: flex; justify-content: center; border: 1px solid #8c8c8c; border-radius: 3px; margin: 1px 1px 1px 1px; width: 73px; background: linear-gradient(#fbfbfb 0, #ededed 50%, #d6d6d6 55%, #dadada); line-height: 15px; box-shadow: inset 0 0 0 1px #fff; }
  .rows { height: 754px; overflow: hidden; }
  .row { display: flex; height: 16px; background: #fff; border-bottom: 1px solid #808080; border-left: 1px solid #808080; }
  .row div { width: 75px; flex: none; border-right: 1px solid #808080; overflow: hidden; line-height: 15px; padding-left: 0; }
  .row:first-child { height: 15px; }
  .row:first-child div { line-height: 13px; }
  .vs { margin: 19px 1px 0 auto; width: 16px; display: flex; flex-direction: column; background: linear-gradient(90deg, #e3e3e3, #f3f3f3); }
  .thumb { height: 575px; border: 1px solid #8c949c; border-radius: 2px; background: linear-gradient(90deg, #eef3f5 0, #dde6ea 40%, #c2cdd4 50%, #b9c4cc); display: flex; align-items: center; justify-content: center; margin-right: 1px; }
  .thumb i { width: 7px; height: 8px; background: repeating-linear-gradient(#51606b 0 1px, transparent 1px 3px); }
  .vs > :last-child { margin-top: auto; }
  .foot { height: 19px; background: #f0f0f0; padding-left: 2px; line-height: 20px; }
  .mark { position: absolute; border: 4px solid #ed1c24; }
  .m1 { left: 4px; top: 23px; width: 157px; height: 26px; border-width: 5px 4px; }
  .m2 { left: 231px; top: 24px; width: 228px; height: 23px; }
  .status { height: 20px; flex: none; display: flex; align-items: center; background: #f0f0f0; padding: 2px 0 0 7px; gap: 5px; }
  .cells { margin: 0 0 0 auto; display: flex; gap: 2px; align-self: stretch; padding-right: 1px; }
  .cells div { width: 119px; border: 1px solid #fff; border-left: 2px solid #828282; border-top: 2px solid #8e8e8e; line-height: 15px; }
  .cells div:first-child { width: 74px; } .cells div:last-child { width: 110px; }
  .task { flex: 1; display: flex; position: relative; border-top: 1px solid #16304a; box-shadow: inset 0 1px #8ab8d6; background: linear-gradient(90deg, #1d6296 0, #1d5f92 50px, #2c86bd 70px, #2c97cb 190px, #3fa2d3 240px, #6ab5df 370px, #55add9 470px, #409fd3 580px, #2f8fcc 660px, #3b96d0 760px, #3c92d0 920px, #3587ca 1000px, #2780c8 1080px, #2376be 1180px, #2f79bd 1240px, #2a74ba 1330px, #1c66ac 1380px, #1b5dab 1500px, #1b5aa2 1600px, #2560a3 1660px, #17406f 1690px, #1c4a80 1800px, #16365f); }
  .streak { position: absolute; left: 1295px; top: 0; filter: blur(1.500px); }
  .orb { width: 60px; padding: 0 0 0 8px; }
  .tb { width: 59px; height: 38px; margin-right: 3px; margin-top: 1px; display: flex; align-items: center; justify-content: center; border: 1px solid #1b4f76; border-radius: 3px; box-shadow: inset 0 0 0 1px #b9dcf0; background: linear-gradient(135deg, #9dcbe8aa, #4a9fd488 60%, #8cc6e688); }
  .plain { border-color: transparent; background: none; box-shadow: none; }
  .plain svg { margin-right: 2px; }
  .on { background: linear-gradient(160deg, #dcecf6, #a9d0ea 60%, #c3dff1); }
  .tray { margin-left: auto; display: flex; align-items: center; color: #fff; padding-right: 1px; }
  .tray > svg { margin-right: 8px; }
  .tray > svg:first-of-type { margin: 2px 14px 0 16px; }
  .en { margin-bottom: 4px; }
  .clock { width: 76px; display: flex; flex-direction: column; align-items: center; gap: 1px; margin-right: 3px; }
  .clock span { line-height: 16px; }
  .show { width: 14px; height: 39px; border: 1px solid #0d2a4a; box-shadow: inset 1px 1px #7ea0c2; background: linear-gradient(150deg, #6f8fae, #1d477a 50%); align-self: flex-start; }
</style>
